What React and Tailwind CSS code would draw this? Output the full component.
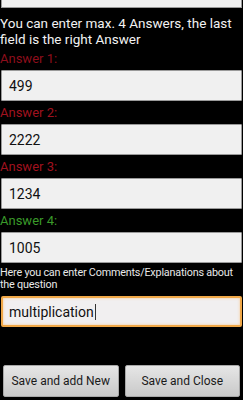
import React from "react";

function Field({ value, focused }) {
  return (
    <div
      className={
        focused
          ? "mx-[1px] h-[31px] flex items-center pl-[6px] bg-[#f1eff0] border-[2px] border-[#f0a848] rounded-[2px] shadow-[inset_0_0_3px_#f7c890]"
          : "mx-[1px] h-[31px] flex items-center pl-[7px] bg-[#f0f0f0] border border-[#9a9a9a] rounded-[1px]"
      }
    >
      <span className="text-[14px] text-[#111] leading-none">{value}</span>
      {focused && <span className="w-[1px] h-[16px] bg-[#333] ml-[1px]" />}
    </div>
  );
}

function Label({ children, color }) {
  return (
    <div className={"h-[23px] flex items-center text-[13px] leading-none " + color}>
      {children}
    </div>
  );
}

export default function App() {
  return (
    <div
      className="w-[243px] h-[400px] bg-black overflow-hidden flex flex-col"
      style={{ fontFamily: "Roboto, 'Noto Sans', sans-serif" }}
    >
      <div className="mx-[1px] h-[8px] bg-[#f0f0f0] border-x border-b border-[#9a9a9a]" />
      <div className="mt-[7px] text-[13.5px] leading-[16px] text-[#f2f2f2] pr-[2px]">
        You can enter max. 4 Answers, the last field is the right Answer
      </div>
      <Label color="text-[#8e0e1c]">Answer 1:</Label>
      <Field value="499" />
      <Label color="text-[#a0121f]">Answer 2:</Label>
      <Field value="2222" />
      <Label color="text-[#a0121f]">Answer 3:</Label>
      <Field value="1234" />
      <Label color="text-[#3a9a2a]">Answer 4:</Label>
      <Field value="1005" />
      <div className="mt-[4px] text-[10.8px] leading-[12px] text-[#e8e8e8] tracking-[-0.2px]">
        <div className="whitespace-nowrap">Here you can enter Comments/Explanations about</div>
        <div>the question</div>
      </div>
      <div className="h-[5px]" />
      <Field value="multiplication" focused />
      <div className="flex-1" />
      <div className="flex gap-[6px] px-[3px] pb-[3px]">
        <button className="flex-1 h-[32px] rounded-[2px] bg-gradient-to-b from-[#e6e6e6] to-[#c9c9c9] text-[12px] text-[#1a1a1a] border border-[#a8a8a8]">
          Save and add New
        </button>
        <button className="flex-1 h-[32px] rounded-[2px] bg-gradient-to-b from-[#e6e6e6] to-[#c9c9c9] text-[12px] text-[#1a1a1a] border border-[#a8a8a8]">
          Save and Close
        </button>
      </div>
    </div>
  );
}
